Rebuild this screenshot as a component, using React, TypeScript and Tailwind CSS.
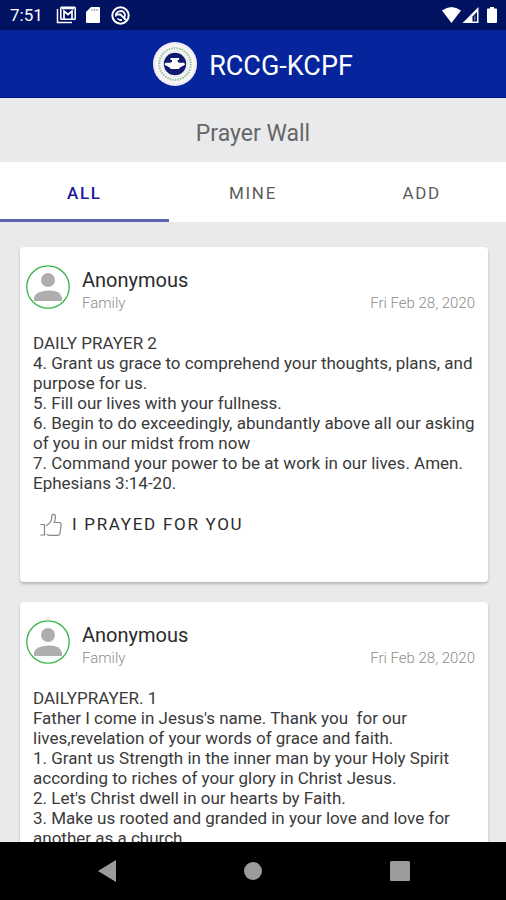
import { useState } from "react";
import clsx from "clsx";

interface Prayer {
  id: number;
  author: string;
  category: string;
  date: string;
  body: string;
}

const TABS = ["ALL", "MINE", "ADD"];

const PRAYERS: Prayer[] = [
  {
    id: 2,
    author: "Anonymous",
    category: "Family",
    date: "Fri Feb 28, 2020",
    body: `DAILY PRAYER 2
4. Grant us grace to comprehend your thoughts, plans, and purpose for us.
5. Fill our lives with your fullness.
6. Begin to do exceedingly, abundantly above all our asking of you in our midst from now
7. Command your power to be at work in our lives. Amen. Ephesians 3:14-20.`,
  },
  {
    id: 1,
    author: "Anonymous",
    category: "Family",
    date: "Fri Feb 28, 2020",
    body: `DAILYPRAYER. 1
Father I come in Jesus's name. Thank you  for our lives,revelation of your words of grace and faith.
1. Grant us Strength in the inner man by your Holy Spirit according to riches of your glory in Christ Jesus.
2. Let's Christ dwell in our hearts by Faith.
3. Make us rooted and granded in your love and love for another as a church`,
  },
];

function StatusBar() {
  return (
    <div className="flex h-[30px] shrink-0 items-center justify-between bg-[#001260] pr-2 pl-[10px] text-white">
      <div className="flex items-center">
        <span className="w-[46px] text-[17px] leading-5">7:51</span>
        <svg className="mr-[10px] h-[18px] w-5" viewBox="0 0 20 18" fill="none">
          <path d="M1.500 3v13.500h14.500" stroke="white" strokeWidth="1.5" />
          <rect x="4.800" y="1.300" width="14.400" height="12" rx="0.800" stroke="white" strokeWidth="1.600" />
          <path d="M8 13V5l4 3.500L16 5v8" stroke="white" strokeWidth="1.700" />
          <path d="M6 2.500h12" stroke="white" strokeWidth="1.500" />
        </svg>
        <svg className="mr-[11px] h-[18px] w-[14px]" viewBox="0 0 14 18">
          <path d="M5 1h8q1 0 1 1v14q0 1-1 1H1q-1 0-1-1V6z" fill="white" />
          <path d="M6 3v2M8.500 3v2M11 3v2" stroke="#8088b0" strokeWidth="1" />
        </svg>
        <svg className="size-[19px]" viewBox="0 0 19 19" fill="none" stroke="white">
          <circle cx="9.500" cy="9.500" r="8.200" strokeWidth="2" />
          <path d="M5 10.500A4.600 4.600 0 0 1 13.800 8q.6 2-.6 3.800" strokeWidth="1.800" />
          <path d="M6 8.500h3.500L15 14" strokeWidth="2" />
          <path d="M6.500 12.500q1.800 2 4.500 1.300" strokeWidth="1.800" />
        </svg>
      </div>
      <svg className="h-[18px] w-[56px]" viewBox="0 0 56 18">
        <path d="M0 4.500Q9.500-2.500 19 4.500L9.500 17z" fill="white" />
        <path d="M36.500 1v16h-16z" fill="white" />
        <path d="M35 6v9.500h-4.500V10.500z" fill="#001260" />
        <path d="M33.500 9v5.500h-1.500v-4z" fill="#6670a2" />
        <path d="M48 1h4v1.500h2q1 0 1 1V16q0 1-1 1h-8q-1 0-1-1V3.500q0-1 1-1h2z" fill="white" />
      </svg>
    </div>
  );
}

function Logo() {
  return (
    <svg className="size-[44px]" viewBox="0 0 44 44" fill="none">
      <circle cx="22" cy="22" r="22" fill="#f8f5f7" />
      <circle cx="22" cy="22" r="20.500" stroke="#e9e1e8" strokeWidth="0.800" />
      <circle cx="22" cy="22" r="15.800" stroke="#9cc3a2" strokeWidth="2.200" strokeDasharray="1.500 1.100" />
      <circle cx="22" cy="22" r="13" stroke="#e4e6ef" strokeWidth="0.800" />
      <circle cx="22" cy="22" r="11.200" fill="#101a70" />
      <path
        d="M17.500 16h8.500v2h-1.300v2l2 .8h4.300q1.200 1 .8 2.200l-4.500 2.300-1.500 1.800h-8l-1.500-1.800-4.500-2.300q-.4-1.200.8-2.200H17l2-.8v-2h-1.500z"
        fill="white"
      />
    </svg>
  );
}

function Avatar() {
  return (
    <svg className="size-[44px] shrink-0" viewBox="0 0 44 44">
      <circle cx="22" cy="22" r="21.200" fill="white" stroke="#35b34a" strokeWidth="1.300" />
      <circle cx="22" cy="15" r="7" fill="#aeaeae" />
      <path d="M8 36v-3.500Q10 26 22 25.500T36 32.500V36z" fill="#aeaeae" />
    </svg>
  );
}

function ThumbIcon() {
  return (
    <svg
      className="h-6 w-[22px]"
      viewBox="0 0 22 24"
      fill="none"
      stroke="#858585"
      strokeWidth="1.200"
      strokeLinecap="round"
      strokeLinejoin="round"
    >
      <path d="M.8 11.500H4.500V22H.8M2.500 22h2" />
      <path d="M6.500 12.500q5-3 5.300-7.500V3q0-1.600 1.600-1.600 2 0 2 2.500 0 2.600-1.200 5.600h4.600q2.400 0 2.300 2.200l-1 8q-.3 2.600-2.500 2.600H9.500L6.800 21.500" />
    </svg>
  );
}

function PrayerCard({ prayer }: { prayer: Prayer }) {
  return (
    <article className="rounded bg-white pt-[18px] pb-[43px] shadow-[0_2px_3px_rgba(0,0,0,0.22)]">
      <header className="flex gap-3 pr-[13px] pl-[6px]">
        <Avatar />
        <div className="min-w-0 flex-1 pt-[3px]">
          <h2 className="text-[20px] leading-6 text-[#2b2b2b]">{prayer.author}</h2>
          <div className="flex justify-between text-[15px] leading-[22px] font-light text-[#8c8c8c]">
            <span>{prayer.category}</span>
            <time>{prayer.date}</time>
          </div>
        </div>
      </header>
      <p className="mt-[19px] pr-1 pl-[13px] text-[17px] leading-5 whitespace-pre-wrap text-[#3a3a3a]">
        {prayer.body}
      </p>
      <button
        type="button"
        className="mt-[18px] ml-5 flex h-7 items-center gap-[10px] text-[17px] tracking-widest text-[#2b2b2b]"
      >
        <ThumbIcon />I PRAYED FOR YOU
      </button>
    </article>
  );
}

function NavBar() {
  return (
    <nav className="grid h-[58px] shrink-0 grid-cols-[1fr_86px_1fr] items-center bg-black">
      <button type="button" aria-label="Back" className="mr-[94px] justify-self-end">
        <svg className="h-[22px] w-[18px]" viewBox="0 0 18 22">
          <path d="M18 0v22L0 11z" fill="#9b9b9b" />
        </svg>
      </button>
      <button type="button" aria-label="Home" className="justify-self-center">
        <svg className="size-[18px]" viewBox="0 0 18 18">
          <circle cx="9" cy="9" r="9" fill="#9b9b9b" />
        </svg>
      </button>
      <button type="button" aria-label="Recent apps" className="ml-[94px] justify-self-start">
        <svg className="size-5" viewBox="0 0 20 20">
          <rect width="20" height="20" rx="1.500" fill="#9b9b9b" />
        </svg>
      </button>
    </nav>
  );
}

export default function App() {
  const [activeTab, setActiveTab] = useState("ALL");

  return (
    <div className="flex h-screen flex-col bg-[#e9eaec] font-['Roboto',sans-serif]">
      <StatusBar />
      <header className="flex h-[68px] shrink-0 items-center justify-center gap-3 border-b border-[#00108a] bg-[#06249b] text-white">
        <Logo />
        <span className="pt-1 text-[27px] leading-8">RCCG-KCPF</span>
      </header>
      <h1 className="flex h-16 shrink-0 items-center justify-center pt-2 text-[23px] leading-7 text-[#666]">
        Prayer Wall
      </h1>
      <div role="tablist" className="grid h-[60px] shrink-0 grid-cols-3 bg-white">
        {TABS.map((tab) => (
          <button
            key={tab}
            type="button"
            role="tab"
            aria-selected={tab === activeTab}
            onClick={() => setActiveTab(tab)}
            className={clsx(
              "border-b-[3px] pt-[6px] text-[17px] tracking-widest",
              tab === activeTab
                ? "border-[#5f62ae] font-medium text-[#1a1a9c]"
                : "border-transparent text-[#5c5c5c]",
            )}
          >
            {tab}
          </button>
        ))}
      </div>
      <main className="flex min-h-0 flex-1 flex-col gap-5 overflow-hidden pt-[25px] pr-[18px] pl-5">
        {PRAYERS.map((prayer) => (
          <PrayerCard key={prayer.id} prayer={prayer} />
        ))}
      </main>
      <NavBar />
    </div>
  );
}
